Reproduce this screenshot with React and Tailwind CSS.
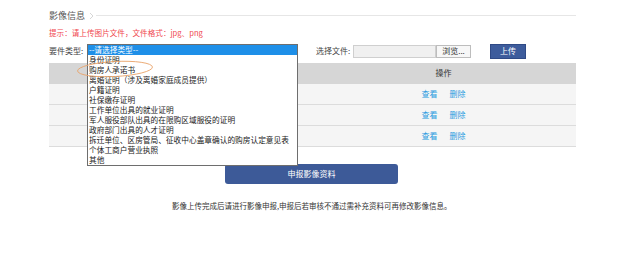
import React from 'react'

const options = [
  '--请选择类型--',
  '身份证明',
  '购房人承诺书',
  '离婚证明（涉及离婚家庭成员提供）',
  '户籍证明',
  '社保缴存证明',
  '工作单位出具的就业证明',
  '军人服役部队出具的在限购区域服役的证明',
  '政府部门出具的人才证明',
  '拆迁单位、区房管局、征收中心盖章确认的购房认定意见表',
  '个体工商户营业执照',
  '其他',
]

function Row() {
  return (
    <div className="flex h-[21px] border-b border-[#dcdcdc] bg-[#f5f5f5]">
      <div className="w-[262px]" />
      <div className="flex flex-1 items-center justify-center gap-[12px] text-[#2a9be0]">
        <span>查看</span>
        <span>删除</span>
      </div>
    </div>
  )
}

export default function App() {
  return (
    <div
      className="relative h-[273px] w-[640px] bg-white text-[8px] leading-none text-[#333]"
      style={{ fontFamily: '"Noto Sans CJK SC", "Liberation Sans", sans-serif' }}
    >
      <div className="ml-[49px] w-[527px] pt-[10px]">
        {/* 标题 */}
        <div className="flex h-[11px] items-center">
          <span className="text-[9px] text-[#555]">影像信息</span>
          <svg className="ml-[4px] h-[8px] w-[5px]" viewBox="0 0 5 8">
            <path d="M1 1l3 3-3 3" fill="none" stroke="#ccc" strokeWidth="0.8" />
          </svg>
          <div className="ml-[2px] flex-1 border-t border-[#e6e6e6]" />
        </div>

        <div className="mt-[8px] text-[7.6px] text-[#f0474e]">提示：请上传图片文件，文件格式：jpg、png</div>

        {/* 表单行 */}
        <div className="mt-[7px] flex h-[15px] items-center">
          <span className="w-[38px] text-[#444]">要件类型:</span>
          <div className="h-[13px] w-[210px]" />
          <span className="ml-[19px] w-[37px] text-[#444]">选择文件:</span>
          <div className="h-[13px] w-[83px] border border-[#cfcfcf] bg-[#f0f0f0]" />
          <div className="flex h-[13px] w-[35px] items-center justify-center border border-[#bdbdbd] bg-[#f7f7f7] text-[#333]">
            浏览...
          </div>
          <div className="ml-[19px] flex h-[15px] w-[36px] items-center justify-center border border-[#2f4a86] bg-[#3d5c9c] text-white">
            上传
          </div>
        </div>

        {/* 表格 */}
        <div className="mt-[4px]">
          <div className="flex h-[21px] bg-[#d6d6d6]">
            <div className="w-[262px]" />
            <div className="flex flex-1 items-center justify-center text-[#333]">操作</div>
          </div>
          <Row />
          <Row />
          <Row />
        </div>

        <div className="mt-[17px] flex">
          <div className="ml-[176px] flex h-[20px] w-[173px] items-center justify-center rounded-[3px] bg-[#3d5a98] text-white">
            申报影像资料
          </div>
        </div>

        <div className="mt-[18px] pl-[123px] text-[7.5px] text-[#333]">
          影像上传完成后请进行影像申报,申报后若审核不通过需补充资料可再修改影像信息。
        </div>
      </div>

      {/* 展开的下拉列表 */}
      <div className="absolute left-[87px] top-[44px] w-[211px] border border-[#6e6e6e] bg-white text-[7.7px] text-[#222]">
        {options.map((o, i) => (
          <div
            key={o}
            className={`flex h-[10px] items-center px-[1px] ${i === 0 ? 'bg-[#1e8fe8] text-white' : ''}`}
          >
            {o}
          </div>
        ))}
      </div>

      {/* 圈注 */}
      <svg className="absolute left-[75px] top-[59px] h-[20px] w-[80px]" viewBox="0 0 80 20">
        <ellipse cx="40" cy="10" rx="37.5" ry="7.5" transform="rotate(-3 40 10)" fill="none" stroke="#e9a46a" strokeWidth="0.9" />
      </svg>
    </div>
  )
}
